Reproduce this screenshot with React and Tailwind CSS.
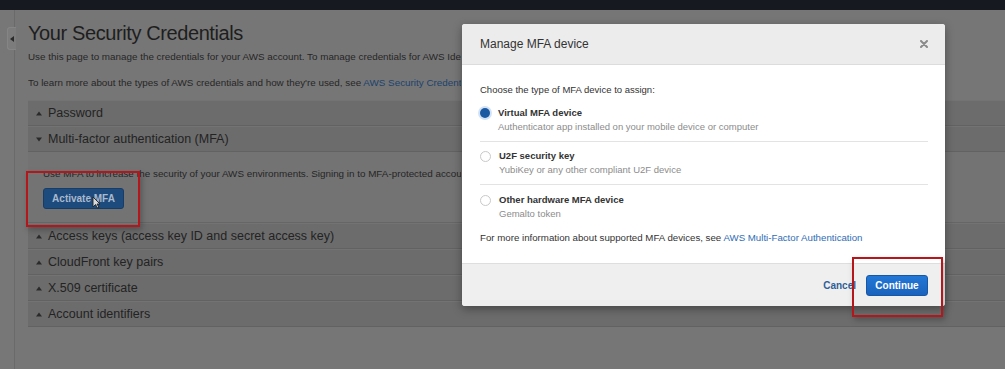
import React from "react";

function Tri({ down }) {
  return (
    <svg width="6" height="5" viewBox="0 0 6 5" className="shrink-0">
      {down ? <polygon points="0,0.5 6,0.5 3,4.5" fill="#2a2a2a" /> : <polygon points="0,4.5 6,4.5 3,0.5" fill="#2a2a2a" />}
    </svg>
  );
}

function Row({ label, down }) {
  return (
    <div className="h-[26px] flex items-center gap-[6px] pl-[8px] bg-[#6c6c6c] border-b border-[#626262] border-t border-t-[#737373] whitespace-nowrap">
      <Tri down={down} />
      <span className="text-[12.5px] text-[#232323]">{label}</span>
    </div>
  );
}

function Option({ selected, title, sub, last, extra }) {
  return (
    <div className={"flex gap-[8px] pb-[7px] " + (extra ? "pt-[8px] " : "pt-[7px] ") + (last ? "" : "border-b border-[#e3e3e3]")}>
      <div className="h-[14px] flex items-center">
        {selected ? (
          <div className="w-[10px] h-[10px] rounded-full bg-[#1b5aa3] shadow-[0_0_0_2px_#d3e3f5]" />
        ) : (
          <div className="w-[11px] h-[11px] rounded-full border border-[#c9c9c9] bg-white" />
        )}
      </div>
      <div>
        <div className="text-[9.5px] leading-[14px] font-bold text-[#333]">{title}</div>
        <div className="text-[9.5px] leading-[14px] text-[#8c8c8c]">{sub}</div>
      </div>
    </div>
  );
}

export default function App() {
  return (
    <div className="relative w-[1005px] h-[369px] overflow-hidden bg-[#767676] font-['Liberation_Sans',Arial,sans-serif]">
      <div className="h-[10px] bg-[#161a20]" />
      <div className="flex h-[359px]">
        <div className="w-[15px] shrink-0 border-r border-[#6a6a6a] bg-[#777777] pt-[17px]">
          <div className="ml-[7px] w-[9px] h-[23px] rounded-l-[3px] bg-[#7c7c7c] border border-[#858585] border-r-0 flex items-center justify-center">
            <svg width="4" height="6" viewBox="0 0 4 6"><polygon points="4,0 4,6 0,3" fill="#2a2a2a" /></svg>
          </div>
        </div>
        <main className="flex-1 min-w-0 pl-[13px] pt-[11px]">
          <h1 className="text-[20px] leading-[24px] tracking-[-0.4px] text-[#1e1e1e] whitespace-nowrap">Your Security Credentials</h1>
          <p className="mt-[5px] w-[433px] overflow-hidden text-[9.85px] leading-[14px] text-[#262626] whitespace-nowrap">
            Use this page to manage the credentials for your AWS account. To manage credentials for AWS Identity and Access Management (IAM) users, use the IAM Console.
          </p>
          <p className="mt-[12px] w-[433px] overflow-hidden text-[9.85px] leading-[14px] text-[#262626] whitespace-nowrap">
            To learn more about the types of AWS credentials and how they're used, see <span className="text-[#1c426d]">AWS Security Credentials</span> in AWS General Reference.
          </p>
          <div className="mt-[10px]">
            <Row label="Password" />
            <Row label="Multi-factor authentication (MFA)" down />
            <div className="h-[71px] bg-[#737373] pl-[15px] pt-[15px] border-b border-[#666]">
              <p className="w-[418px] overflow-hidden text-[9.85px] leading-[14px] text-[#262626] whitespace-nowrap">
                Use MFA to increase the security of your AWS environments. Signing in to MFA-protected accounts requires a user name, password, and an authentication code from an MFA device.
              </p>
              <button className="mt-[7px] w-[81px] h-[21px] rounded-[3px] bg-[#1d4b7e] border border-[#173d66] text-[10px] font-bold text-[#a9b9cc]">
                Activate MFA
              </button>
            </div>
            <Row label="Access keys (access key ID and secret access key)" />
            <Row label="CloudFront key pairs" />
            <Row label="X.509 certificate" />
            <Row label="Account identifiers" />
          </div>
        </main>
      </div>

      {/* cursor */}
      <svg className="absolute left-[92px] top-[196px]" width="9" height="13" viewBox="0 0 9 13">
        <path d="M1 1 L1 11 L3.5 8.5 L5.5 12 L7 11.3 L5 8 L8 8 Z" fill="#d9d9d9" stroke="#222" strokeWidth="0.9" />
      </svg>

      {/* annotation box 1 */}
      <div className="absolute left-[26px] top-[171px] w-[114px] h-[56px] border-2 border-[#b5161c] shadow-[2px_3px_6px_rgba(0,0,0,0.25)]" />

      {/* modal */}
      <div className="absolute left-[462px] top-[24px] w-[483px] h-[282px] rounded-[3px] bg-white shadow-[0_3px_10px_rgba(0,0,0,0.35)] flex flex-col overflow-hidden">
        <div className="h-[41px] shrink-0 bg-[#ececec] border-b border-[#dcdcdc] flex items-center justify-between pl-[18px] pr-[17px]">
          <span className="text-[12px] text-[#333]">Manage MFA device</span>
          <svg width="8" height="8" viewBox="0 0 8 8">
            <path d="M1 1 L7 7 M7 1 L1 7" stroke="#8a8a8a" strokeWidth="2" strokeLinecap="round" />
          </svg>
        </div>
        <div className="h-[198px] shrink-0 px-[18px] pt-[18px]">
          <div className="text-[9.5px] leading-[14px] text-[#333]">Choose the type of MFA device to assign:</div>
          <div className="mt-[2px] mr-[-1px]">
            <Option selected title="Virtual MFA device" sub="Authenticator app installed on your mobile device or computer" />
            <Option title="U2F security key" sub="YubiKey or any other compliant U2F device" />
            <Option title="Other hardware MFA device" sub="Gemalto token" last extra />
          </div>
          <div className="mt-[3px] text-[9.7px] leading-[14px] text-[#333] whitespace-nowrap">
            For more information about supported MFA devices, see <span className="text-[#2f6db5]">AWS Multi-Factor Authentication</span>
          </div>
        </div>
        <div className="flex-1 bg-[#efefef] border-t border-[#dedede] flex items-center justify-end gap-[10px] pr-[17px]">
          <span className="text-[10px] font-bold text-[#2f5f98]">Cancel</span>
          <button className="w-[62px] h-[21px] rounded-[3px] bg-gradient-to-b from-[#2277d6] to-[#1a63bd] border border-[#1757a6] text-[10px] font-bold text-white">
            Continue
          </button>
        </div>
      </div>

      {/* annotation box 2 */}
      <div className="absolute left-[852px] top-[257px] w-[91px] h-[60px] border-2 border-[#b5161c] shadow-[2px_3px_6px_rgba(0,0,0,0.25)]" />
    </div>
  );
}
